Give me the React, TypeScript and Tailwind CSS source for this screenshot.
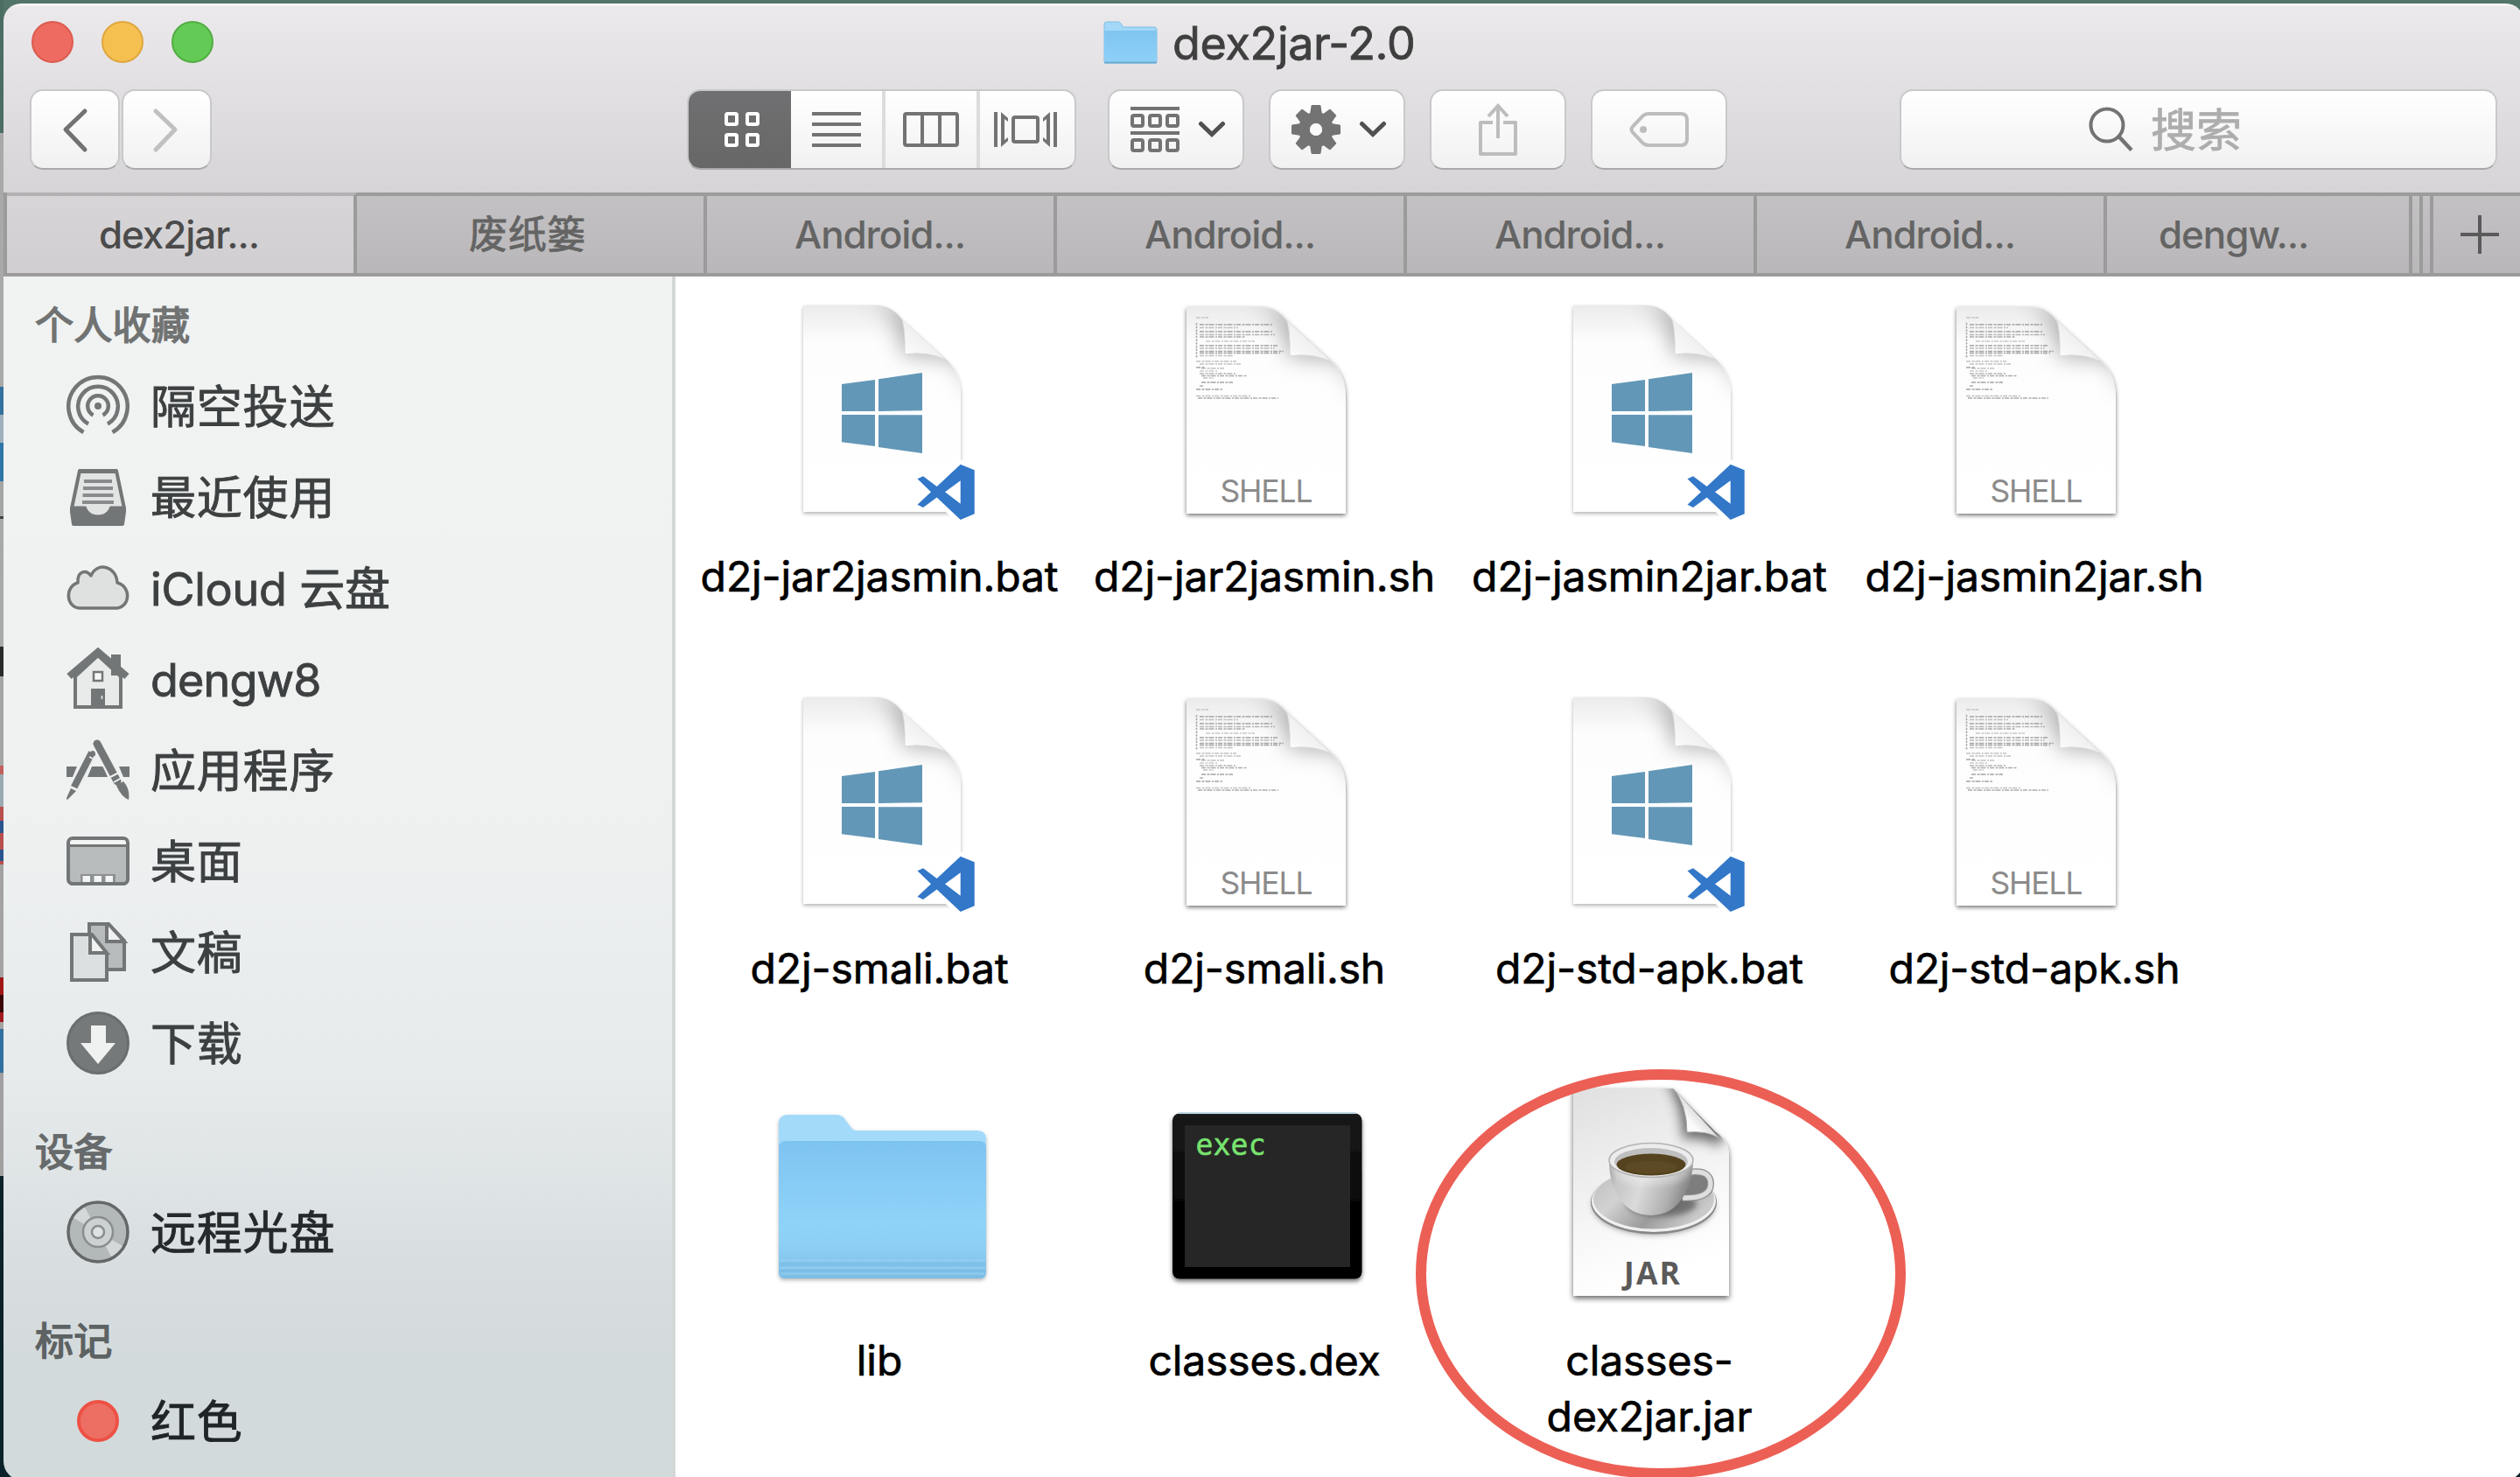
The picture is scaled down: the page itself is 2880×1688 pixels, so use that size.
import React from "react";

const FONT = "font-['Inter','Noto_Sans_CJK_SC',sans-serif]";
const BUTTON =
  "flex h-[92px] items-center rounded-[15px] border-2 border-[#c9c8ca] border-b-[#aaa9aa] bg-linear-to-b from-white to-[#f1f1f1]";

/* ---------- toolbar glyphs ---------- */

function Chevron({ d, color, width }: { d: string; color: string; width: number }) {
  return (
    <svg width="100" height="88" viewBox="0 0 100 88" fill="none" className="block shrink-0">
      <path d={d} stroke={color} strokeWidth={width} strokeLinecap="round" strokeLinejoin="round" />
    </svg>
  );
}

function DownChevron() {
  return (
    <svg width="32" height="22" viewBox="0 0 32 22" fill="none" className="block">
      <path d="M3.5 4.5 L16 16.5 L28.5 4.5" stroke="#515151" strokeWidth="5" strokeLinecap="round" />
    </svg>
  );
}

function GridGlyph() {
  return (
    <svg width="40" height="40" fill="none" stroke="#fff" strokeWidth="4" className="block">
      {[2, 26].map((x) => [2, 26].map((y) => <rect key={`${x}-${y}`} x={x} y={y} width="12" height="12" rx="1.5" />))}
    </svg>
  );
}

function ListGlyph() {
  return (
    <svg width="56" height="40" fill="#737373" className="block">
      {[0, 12, 24, 36].map((y) => (
        <rect key={y} y={y} width="56" height="4" />
      ))}
    </svg>
  );
}

function ColumnsGlyph() {
  return (
    <svg width="64" height="40" fill="none" stroke="#737373" strokeWidth="4" className="block">
      <rect x="2" y="2" width="60" height="36" rx="2" />
      <path d="M22 2V38M42 2V38" />
    </svg>
  );
}

function CoverFlowGlyph() {
  return (
    <svg width="72" height="40" className="block">
      <path d="M2 0V40M70 0V40" stroke="#737373" strokeWidth="4" />
      <path d="M8 0l8 7v4l-4-3V32l4-3v4l-8 7zM64 0l-8 7v4l4-3V32l-4-3v4l8 7z" fill="#737373" />
      <rect x="22" y="6" width="28" height="28" rx="2" fill="none" stroke="#737373" strokeWidth="4" />
    </svg>
  );
}

function ArrangeGlyph() {
  return (
    <svg width="56" height="52" fill="none" stroke="#737373" strokeWidth="4" className="block">
      <path d="M0 2H56M0 30H56" />
      {[2, 22, 42].map((x) => (
        <React.Fragment key={x}>
          <rect x={x} y="10" width="12" height="12" rx="2" />
          <rect x={x} y="38" width="12" height="12" rx="2" />
        </React.Fragment>
      ))}
    </svg>
  );
}

function GearGlyph() {
  return (
    <svg width="56" height="56" viewBox="-28 -28 56 56" fill="#737373" className="block">
      {[0, 45, 90, 135, 180, 225, 270, 315].map((a) => (
        <path key={a} d="M-7.500 -14L-5.500 -27Q-5.300 -28 -4.500 -28H4.500Q5.300 -28 5.500 -27L7.500 -14Z" transform={`rotate(${a})`} />
      ))}
      <circle r="13.500" fill="none" stroke="#737373" strokeWidth="13" />
      <circle r="7" fill="#f9f9f9" />
    </svg>
  );
}

function ShareGlyph() {
  return (
    <svg width="44" height="60" fill="none" stroke="#bdbdbd" strokeWidth="4" className="block">
      <path d="M16 22H2V58H42V22H28" strokeLinejoin="round" />
      <path d="M22 40V3M11 15L22 3L33 15" />
    </svg>
  );
}

function TagGlyph() {
  return (
    <svg width="68" height="40" fill="none" stroke="#bdbdbd" strokeWidth="4" className="block">
      <path d="M22 2H59Q66 2 66 9V31Q66 38 59 38H22Q18 38 15 35L4 23.500Q1 20 4 16.500L15 5Q18 2 22 2Z" />
      <circle cx="16" cy="20" r="4" fill="#bdbdbd" stroke="none" />
    </svg>
  );
}

function SearchGlyph() {
  return (
    <svg width="52" height="52" fill="none" stroke="#737373" strokeWidth="4" className="block">
      <circle cx="21" cy="21" r="18.500" />
      <path d="M34.500 34L49 49.500" strokeWidth="4.500" />
    </svg>
  );
}

function SmallFolder() {
  return (
    <svg width="62" height="52" className="block">
      <defs>
        <linearGradient id="sf" x1="0" y1="0" x2="0" y2="1">
          <stop offset="0" stopColor="#7fc5f1" />
          <stop offset="1" stopColor="#8ed1f7" />
        </linearGradient>
      </defs>
      <path d="M1 4Q1 1 4 1H17Q19 1 20 3L23 7H58Q61 7 61 10V46Q61 48 59 48H3Q1 48 1 46Z" fill="#a3d8f8" stroke="#7fbde3" />
      <path d="M1 11H61V46Q61 48 59 48H3Q1 48 1 46Z" fill="url(#sf)" />
      <path d="M1 47.500H61" stroke="#6cabd2" strokeWidth="2" />
    </svg>
  );
}

/* ---------- sidebar glyphs ---------- */

const G = "#737676";

function AirDrop() {
  return (
    <g fill="none" stroke={G} strokeWidth="4.500">
      <circle cx="36" cy="36" r="4" fill={G} stroke="none" />
      <path d="M30.500 46.500A11.800 11.800 0 1 1 41.500 46.500" />
      <path d="M25 56.500A22.800 22.800 0 1 1 47 56.500" />
      <path d="M19.500 66A33.700 33.700 0 1 1 52.500 66" />
    </g>
  );
}

function Recents() {
  return (
    <g transform="translate(0 -1)">
      <path d="M15 7H57L66 50V54L64 68H8L6 54V50Z" fill="#e2e4e4" stroke={G} strokeWidth="4" strokeLinejoin="round" />
      <path d="M6 49H21Q22 49 22 51Q26 59 36 59Q46 59 50 51Q50 49 51 49H66V53L63.500 67.500H8.500L6 53Z" fill={G} stroke={G} strokeWidth="3" strokeLinejoin="round" />
      <path d="M14 7.500H58" stroke={G} strokeWidth="5" />
      <path d="M20 19H52M19 27H53M18.500 35H53.500M18 43H54" stroke="#888b8b" strokeWidth="4" />
    </g>
  );
}

function Cloud() {
  return (
    <path
      d="M15 59C-1 58 -2 34 13 30C12 17 22 14 28 22C34 6 57 10 58 30C74 34 73 57 58 59Z"
      fill="#dfe1e1"
      stroke={G}
      strokeWidth="3.500"
      strokeLinejoin="round"
    />
  );
}

function House() {
  return (
    <g transform="translate(0 -1)">
      <path d="M10 34L36 10L62 34V69H10Z" fill="#e9ebeb" stroke={G} strokeWidth="4" />
      <rect x="51" y="9" width="11" height="24" fill={G} />
      <path d="M3 34L36 6L69 34" fill="none" stroke={G} strokeWidth="8" />
      <rect x="31" y="29" width="10" height="10" fill="#f5f6f6" stroke={G} strokeWidth="2.500" />
      <rect x="28" y="48" width="16" height="21" fill={G} />
      <path d="M40.500 56V60" stroke="#eee" strokeWidth="1.500" />
    </g>
  );
}

function Applications() {
  return (
    <g>
      <path d="M0 32H12L7 44H0ZM29 32H42L47 44H24ZM60 32H72V44H65Z" fill={G} />
      <path d="M29 18L8 60" stroke="#eef0f0" strokeWidth="12" />
      <path d="M29 16L8.500 56" stroke={G} strokeWidth="8" strokeLinecap="butt" />
      <path d="M26 21L32 24M5 55L12 58" stroke="#eef0f0" strokeWidth="1.500" />
      <path d="M5 57L11 60L1 70Q0 70 0 68Z" fill={G} />
      <path d="M27 17Q28 12 33 15V20Z" fill={G} />
      <path d="M35 8L60 54" stroke="#eef0f0" strokeWidth="12" />
      <path d="M35 6L58 49" stroke={G} strokeWidth="9" strokeLinecap="round" />
      <path d="M50 44L60 39M54 50L63 45" stroke="#eef0f0" strokeWidth="2" />
      <path d="M57 54L65 49Q73 58 71 70Q63 67 57 54Z" fill={G} />
    </g>
  );
}

function Desktop() {
  return (
    <g>
      <rect x="2" y="10" width="68" height="52" rx="5" fill="#b8bbbb" stroke={G} strokeWidth="4" />
      <path d="M4 15Q4 12 7 12H65Q68 12 68 15V17H4Z" fill="#f2f3f3" />
      <path d="M2 18.500H70" stroke={G} strokeWidth="3" />
      <rect x="16" y="51" width="40" height="10" fill="#8e9191" />
      <path d="M18.500 53H27V61H18.500ZM31.500 53H40V61H31.500ZM44.500 53H53V61H44.500Z" fill="#f3f4f4" />
      <path d="M5 62H67" stroke={G} strokeWidth="4" />
    </g>
  );
}

function Documents() {
  return (
    <g stroke={G} strokeWidth="4">
      <path d="M26 4H48L66 23V56H26Z" fill="#b8bbbb" />
      <path d="M46 4V24H66L48 4Z" fill="#f0f2f2" />
      <path d="M6 16H28L46 38V68H6Z" fill="#dcdfdf" />
      <path d="M27 16V37H46L29 16Z" fill="#f0f2f2" />
    </g>
  );
}

function Downloads() {
  return (
    <g>
      <circle cx="36" cy="36" r="34.500" fill="#767979" stroke="#6b6e6e" strokeWidth="3" />
      <path d="M28 16H45V36H56L36 60L16 36H28Z" fill="#f0f2f2" />
    </g>
  );
}

function Disc() {
  return (
    <g>
      <circle cx="36" cy="36" r="34" fill="#b3b8b9" stroke="#646868" strokeWidth="3.500" />
      <path d="M36 36L8 20A33 33 0 0 1 21 8ZM36 36L64 52A33 33 0 0 1 51 64Z" fill="#d4d8d9" />
      <circle cx="36" cy="36" r="17" fill="#ccd1d2" stroke="#8a8e8f" strokeWidth="2.500" />
      <circle cx="36" cy="36" r="7" fill="#dde2e3" stroke="#8a8e8f" strokeWidth="2.500" />
    </g>
  );
}

function RedTag() {
  return <circle cx="36" cy="36" r="22" fill="#ed6f64" stroke="#ee5144" strokeWidth="4" />;
}

/* ---------- file icons, drawn on a 256 × 256 board ---------- */

function PageDefs({ id, strong }: { id: string; strong?: boolean }) {
  const dark = strong ? 0.55 : 0.3;
  return (
    <defs>
      <filter id={`${id}-shadow`} x="-20%" y="-20%" width="140%" height="140%">
        <feDropShadow dx="0" dy="2" stdDeviation={strong ? 2.5 : 2} floodOpacity={dark} />
      </filter>
      <filter id={`${id}-soft`} x="-60%" y="-60%" width="220%" height="220%">
        <feGaussianBlur stdDeviation="12" />
      </filter>
      <linearGradient id={`${id}-fold`} x1="0" y1="1" x2="0.6" y2="0.3">
        <stop offset="0" stopColor="#fff" />
        <stop offset="1" stopColor="#ebebeb" />
      </linearGradient>
      <linearGradient id={`${id}-top`} x1="0" y1="0" x2="0" y2="1">
        <stop offset="0" stopColor="#ebebeb" />
        <stop offset="0.18" stopColor="#fdfdfd" />
        <stop offset="1" stopColor="#fff" />
      </linearGradient>
    </defs>
  );
}

function Page({ id, top, left }: { id: string; top: number; left: number }) {
  const body = `M${left} ${top}H124Q142 ${top} 153 ${top + 15}L200 ${top + 58}Q221 ${top + 74} 221 ${top + 102}V${top + 236}H${left}Z`;
  return (
    <g>
      <clipPath id={`${id}-clip`}>
        <path d={body} />
      </clipPath>
      <path d={body} fill={`url(#${id}-top)`} filter={`url(#${id}-shadow)`} />
      <g clipPath={`url(#${id}-clip)`}>
        <path d={`M110 ${top - 10}Q150 ${top} 154 ${top + 56}L215 ${top + 62}L240 ${top + 110}L226 ${top + 20}Z`} fill="#999" filter={`url(#${id}-soft)`} opacity="0.75" />
        <path d={`M152 ${top + 12}Q158 ${top + 22} 157 ${top + 56}Q182 ${top + 52} 204 ${top + 62}Z`} fill={`url(#${id}-fold)`} stroke="#dadada" />
      </g>
    </g>
  );
}

function BatIcon() {
  return (
    <svg width="256" height="256" className="block">
      <PageDefs id="bat" />
      <Page id="bat" top={9} left={41} />
      <g transform="translate(-97 -20) scale(.33333)" fill="#6397b7">
        <path d="M546 357L660 342V450H546ZM672 340L822 318V448L672 450ZM546 462H660V570L546 556ZM672 463H822V594L672 573Z" />
      </g>
      <path
        d="M220.700 190.700L236.700 197.300V247.300L220.700 254L193.700 228.500L178 240L171.500 236.700L187 222.300L171.500 207.300L178 204.300L193.700 216Z"
        fill="#fff"
        stroke="#fff"
        strokeWidth="10"
        strokeLinejoin="round"
      />
      <path
        fillRule="evenodd"
        d="M220.700 190.700L236.700 197.300V247.300L220.700 254L193.700 228.500L178 240L171.500 236.700L187 222.300L171.500 207.300L178 204.300L193.700 216ZM220.700 209.300V235.700L203 222.300Z"
        fill="#3277c8"
      />
    </svg>
  );
}

/* x, y, length and opacity of each line of the miniature script */
const SCRIPT_LINES = [
  [50, 23, 14, 0.5],
  [54, 31, 84, 0.9],
  [54, 34.5, 44, 0.6],
  [54, 39, 84, 0.9],
  [54, 42.5, 86, 0.7],
  [54, 45, 52, 0.8],
  [61, 50, 56, 0.5],
  [54, 55, 90, 0.9],
  [54, 58, 86, 0.7],
  [54, 61.5, 96, 0.9],
  [54, 63.5, 92, 0.9],
  [54, 66.5, 38, 0.6],
  [50, 73, 46, 0.6],
  [54, 76, 48, 0.6],
  [50, 80, 10, 0.9],
  [56, 81, 26, 0.6],
  [54, 84, 20, 0.5],
  [54, 87, 42, 0.7],
  [56, 89.5, 52, 0.8],
  [58, 92, 12, 0.6],
  [56, 97, 36, 0.9],
  [54, 101, 4, 0.7],
  [50, 105, 30, 0.9],
  [50, 112.5, 62, 0.6],
  [52, 115, 92, 0.8],
];

function ShellIcon() {
  return (
    <svg width="256" height="256" className="block">
      <PageDefs id="sh" strong />
      <Page id="sh" top={11} left={39} />
      <g stroke="#999" strokeWidth="1.700" strokeDasharray="5 1.500 3 1 6 1.500 2 1">
        {SCRIPT_LINES.map(([x, y, w, o]) => (
          <path key={`${x}-${y}`} d={`M${x} ${y}h${w}`} opacity={o} />
        ))}
      </g>
      <path d="M50.500 29V69" stroke="#a5a5a5" strokeWidth="1.500" strokeDasharray="2.500 1.200" />
      <text x="77.500" y="234" textLength="106" fontSize="35.500" fill="#8b8b8b" className="font-['Inter'] font-normal">
        SHELL
      </text>
    </svg>
  );
}

function FolderIcon() {
  return (
    <svg width="256" height="256" className="block">
      <defs>
        <linearGradient id="folder-front" x1="0" y1="0" x2="0" y2="1">
          <stop offset="0" stopColor="#7ec4f1" />
          <stop offset="0.6" stopColor="#8fd3f8" />
          <stop offset="0.75" stopColor="#8ed0f5" />
          <stop offset="1" stopColor="#7cbce6" />
        </linearGradient>
        <filter id="folder-shadow" x="-10%" y="-10%" width="120%" height="120%">
          <feDropShadow dx="0" dy="2" stdDeviation="2" floodOpacity="0.3" />
        </filter>
      </defs>
      <path d="M13 48Q13 38 23 38H79Q86 38 90 45L96 53Q98 56 102 56H240Q250 56 250 66V216Q250 225 244 225H19Q13 225 13 217Z" fill="#a3dafa" filter="url(#folder-shadow)" />
      <path d="M13 76Q13 68 21 68H242Q250 68 250 76V217Q250 225 244 225H19Q13 225 13 217Z" fill="url(#folder-front)" />
      <path d="M14 204.500H249M14 213H249M15 219.500H248" stroke="#9bd3f4" strokeWidth="1.800" opacity="0.6" />
      <path d="M14 208.500H249M14 216.500H249" stroke="#73b5df" strokeWidth="2.500" opacity="0.35" />
    </svg>
  );
}

function ExecIcon() {
  return (
    <svg width="256" height="256" className="block">
      <defs>
        <linearGradient id="exec-frame" x1="0" y1="0" x2="0" y2="1">
          <stop offset="0" stopColor="#1a1a1a" />
          <stop offset="0.7" stopColor="#000" />
        </linearGradient>
        <filter id="exec-shadow" x="-10%" y="-10%" width="120%" height="120%">
          <feDropShadow dx="0" dy="3" stdDeviation="2.500" floodOpacity="0.55" />
        </filter>
      </defs>
      <rect x="23" y="36.500" width="216.500" height="189" rx="8" fill="url(#exec-frame)" filter="url(#exec-shadow)" />
      <path d="M30 36H232" stroke="#bcd8e4" strokeWidth="2" />
      <rect x="37" y="50" width="189" height="162" fill="#262626" />
      <text x="49.500" y="84" textLength="80" fontSize="33" fill="#78e36f" stroke="#78e36f" strokeWidth="0.500" className="font-['DejaVu_Sans_Mono']">
        exec
      </text>
    </svg>
  );
}

function JarIcon() {
  const body = "M41 8H155L203 57Q219 68 219 84V245H41Z";
  return (
    <svg width="256" height="256" className="block">
      <defs>
        <linearGradient id="jar-page" x1="0" y1="0" x2="0.3" y2="1">
          <stop offset="0" stopColor="#e0e0e0" />
          <stop offset="0.7" stopColor="#f8f8f8" />
          <stop offset="1" stopColor="#fff" />
        </linearGradient>
        <linearGradient id="jar-cup" x1="0" y1="0" x2="1" y2="0.2">
          <stop offset="0" stopColor="#9a9a9a" />
          <stop offset="0.15" stopColor="#c6c6c6" />
          <stop offset="0.45" stopColor="#dadada" />
          <stop offset="0.8" stopColor="#b0b0b0" />
          <stop offset="1" stopColor="#858585" />
        </linearGradient>
        <linearGradient id="jar-saucer" x1="0" y1="0" x2="1" y2="0.5">
          <stop offset="0" stopColor="#bcbcbc" />
          <stop offset="0.35" stopColor="#d2d2d2" />
          <stop offset="0.7" stopColor="#9c9c9c" />
          <stop offset="1" stopColor="#cacaca" />
        </linearGradient>
        <linearGradient id="jar-fold" x1="0" y1="1" x2="0.7" y2="0.3">
          <stop offset="0" stopColor="#fff" />
          <stop offset="0.5" stopColor="#fafafa" />
          <stop offset="1" stopColor="#bdbdbd" />
        </linearGradient>
        <filter id="jar-shadow" x="-20%" y="-20%" width="140%" height="140%">
          <feDropShadow dx="0" dy="3" stdDeviation="3" floodOpacity="0.6" />
        </filter>
        <filter id="jar-blur" x="-60%" y="-60%" width="220%" height="220%">
          <feGaussianBlur stdDeviation="7" />
        </filter>
        <filter id="jar-blur-small" x="-40%" y="-40%" width="180%" height="180%">
          <feGaussianBlur stdDeviation="3" />
        </filter>
        <clipPath id="jar-clip">
          <path d={body} />
        </clipPath>
      </defs>
      <path d={body} fill="url(#jar-page)" filter="url(#jar-shadow)" />
      <g clipPath="url(#jar-clip)">
        <path d="M148 0Q167 30 166 66Q188 62 208 74L230 0Z" fill="#444" filter="url(#jar-blur)" opacity="0.8" />
        <path d="M154 6Q171 26 171 58Q195 56 208 65Z" fill="url(#jar-fold)" stroke="#aaa" strokeWidth="1" />
      </g>
      {/* saucer */}
      <ellipse cx="133" cy="141" rx="70" ry="34" fill="#444" filter="url(#jar-blur-small)" opacity="0.5" />
      <ellipse cx="133" cy="138" rx="72" ry="36.500" fill="#888" />
      <ellipse cx="133" cy="136.500" rx="71" ry="35.500" fill="#f0f0f0" />
      <ellipse cx="133" cy="134.500" rx="69" ry="34" fill="url(#jar-saucer)" />
      <ellipse cx="142" cy="140" rx="40" ry="14" fill="#444" filter="url(#jar-blur-small)" opacity="0.6" />
      {/* handle */}
      <path d="M172 104Q198 100 198 117Q198 134 166 133" fill="#7d7d7d" stroke="#8b8b8b" strokeWidth="8" />
      <path d="M172 104Q198 100 198 117Q198 134 166 133" fill="none" stroke="#dedede" strokeWidth="5.500" />
      {/* cup */}
      <path d="M82 92C82 120 96 153 130 153C163 153 177 120 178 92Z" fill="url(#jar-cup)" />
      <path d="M84 100C88 115 108 118 130 118C152 118 172 115 176 100L178 90H82Z" fill="#fff" opacity="0.3" filter="url(#jar-blur-small)" />
      <ellipse cx="130" cy="90" rx="48" ry="19.500" fill="#ececec" stroke="#b3b3b3" strokeWidth="1.500" />
      <ellipse cx="130" cy="91.500" rx="42" ry="15.500" fill="#bfbfbf" />
      <ellipse cx="130" cy="95" rx="39.500" ry="12.500" fill="#55431f" />
      <ellipse cx="130" cy="98" rx="30" ry="7" fill="#5f4c26" opacity="0.8" />
      <text x="99" y="231.500" textLength="64" fontSize="35.500" fill="#5a5a5a" className="font-['Open_Sans'] font-bold">
        JAR
      </text>
    </svg>
  );
}

/* ---------- data ---------- */

const FAVORITES = [
  { name: "隔空投送", icon: <AirDrop /> },
  { name: "最近使用", icon: <Recents /> },
  { name: "iCloud 云盘", icon: <Cloud />, tracking: "tracking-[-0.2px]" },
  { name: "dengw8", icon: <House />, tracking: "tracking-[-0.8px]" },
  { name: "应用程序", icon: <Applications /> },
  { name: "桌面", icon: <Desktop /> },
  { name: "文稿", icon: <Documents /> },
  { name: "下载", icon: <Downloads /> },
];

const FILES = [
  { name: "d2j-jar2jasmin.bat", icon: <BatIcon /> },
  { name: "d2j-jar2jasmin.sh", icon: <ShellIcon /> },
  { name: "d2j-jasmin2jar.bat", icon: <BatIcon /> },
  { name: "d2j-jasmin2jar.sh", icon: <ShellIcon /> },
  { name: "d2j-smali.bat", icon: <BatIcon /> },
  { name: "d2j-smali.sh", icon: <ShellIcon /> },
  { name: "d2j-std-apk.bat", icon: <BatIcon /> },
  { name: "d2j-std-apk.sh", icon: <ShellIcon /> },
  { name: "lib", icon: <FolderIcon /> },
  { name: "classes.dex", icon: <ExecIcon /> },
  { name: "classes-\ndex2jar.jar", icon: <JarIcon /> },
];

/* colours of whatever lies behind the window's left edge: [height, colour] */
const EDGE: [number, string][] = [
  [152, "#4c6d63"],
  [290, "#a9a9a9"],
  [32, "#33719f"],
  [32, "#9fb0bc"],
  [44, "#2f76a8"],
  [40, "#a5a5a5"],
  [3, "#444444"],
  [146, "#a9a9a9"],
  [34, "#2a2a2a"],
  [102, "#a5a5a5"],
  [10, "#c4605c"],
  [37, "#9aaab2"],
  [16, "#b9504e"],
  [14, "#2a5590"],
  [19, "#b9504e"],
  [13, "#2a5590"],
  [4, "#b9504e"],
  [129, "#a3a3a3"],
  [20, "#a01717"],
  [20, "#3a0505"],
  [11, "#a01a20"],
  [8, "#a3a3a3"],
  [50, "#30719f"],
  [118, "#a0a0a0"],
  [344, "#0b222b"],
];

/* ---------- window ---------- */

function Toolbar() {
  return (
    <div className="-mt-px flex h-[92px] items-start">
      <div className="ml-[30px] flex gap-[2px]">
        <div className={`${BUTTON} w-[103px]`}>
          <Chevron d="M61 23L39 44L61 67" color="#727272" width={5} />
        </div>
        <div className={`${BUTTON} w-[103px]`}>
          <Chevron d="M37 23L59 44L37 67" color="#c0c0c0" width={5} />
        </div>
      </div>
      <div className="ml-[543px] flex h-[92px] w-[445px] overflow-hidden rounded-[15px] border-2 border-[#c9c8ca] border-b-[#aaa9aa] bg-linear-to-b from-white to-[#f1f1f1]">
        <div className="-my-0.5 -ml-0.5 flex w-[119px] items-center bg-linear-to-b from-[#707072] to-[#676767] pl-[43px]">
          <GridGlyph />
        </div>
        <div className="flex w-[108px] items-center border-r-4 border-[#dcdcdc] pl-6">
          <ListGlyph />
        </div>
        <div className="flex w-[108px] items-center border-r-4 border-[#dcdcdc] pl-5">
          <ColumnsGlyph />
        </div>
        <div className="flex items-center pl-4">
          <CoverFlowGlyph />
        </div>
      </div>
      <div className={`${BUTTON} ml-9 w-[156px] gap-[21px] pl-6`}>
        <ArrangeGlyph />
        <DownChevron />
      </div>
      <div className={`${BUTTON} ml-[28px] w-[156px] gap-[21px] pl-6`}>
        <GearGlyph />
        <DownChevron />
      </div>
      <div className={`${BUTTON} ml-[28px] w-[156px] justify-center`}>
        <ShareGlyph />
      </div>
      <div className={`${BUTTON} ml-[28px] w-[156px] justify-center`}>
        <TagGlyph />
      </div>
      <div className={`${BUTTON} ml-[197px] w-[683px] gap-[19px] pl-[214px]`}>
        <SearchGlyph />
        <span className="pt-1 text-[52px] leading-[60px] text-[#adadad] [-webkit-text-stroke:0.8px_#adadad]">搜索</span>
      </div>
    </div>
  );
}

function Tab({ label }: { label: string }) {
  return (
    <div className="flex h-full w-[400px] shrink-0 items-center justify-center border-r-4 border-[#9b9b9b] pr-px">{label}</div>
  );
}

function TabBar() {
  return (
    <div className="flex h-[96px] shrink-0 border-y-4 border-l-4 border-[#9b9b9b] bg-linear-to-b from-[#c3c1c3] to-[#b9b7b9] text-[44px] leading-[60px] font-medium tracking-[-1.1px] text-[#646464]">
      <div className="-mt-1 flex h-[92px] w-[400px] shrink-0 items-center justify-center border-t-4 border-r-4 border-t-[#b3b2b3] border-r-[#9b9b9b] bg-linear-to-b from-[#d7d5d7] to-[#d0ced0] pr-[3px] text-[#4b4b4b]">
        dex2jar...
      </div>
      <div className="flex h-full w-[400px] shrink-0 items-center justify-center border-r-4 border-[#9b9b9b] pr-[6px] font-normal tracking-[0.6px] [-webkit-text-stroke:0.9px_#646464]">
        废纸篓
      </div>
      <Tab label="Android..." />
      <Tab label="Android..." />
      <Tab label="Android..." />
      <Tab label="Android..." />
      <div className="flex h-full w-[349px] shrink-0 items-center border-r-4 border-[#9b9b9b] pl-[59px]">dengw...</div>
      <div className="h-full w-3 shrink-0 border-r-4 border-[#9b9b9b]" />
      <div className="h-full w-3 shrink-0 border-r-4 border-[#9b9b9b]" />
      <div className="flex h-full items-center pl-[31px]">
        <svg width="44" height="44" className="block" stroke="#5a5a5a" strokeWidth="4">
          <path d="M0 22H44M22 0V44" />
        </svg>
      </div>
    </div>
  );
}

function SideItem({ icon, name, tracking }: { icon: React.ReactNode; name: string; tracking?: string }) {
  return (
    <div className="flex h-[104px] items-center gap-[24px] pl-[72px]">
      <svg width="72" height="72" className="block shrink-0">
        {icon}
      </svg>
      <span
        className={`pt-[3px] text-[52px] leading-[64px] whitespace-nowrap [-webkit-text-stroke:0.9px_currentColor] ${tracking ?? "tracking-[0.8px]"}`}
      >
        {name}
      </span>
    </div>
  );
}

function SideHeader({ children }: { children: string }) {
  return <div className="pl-9 text-[44px] leading-[60px] tracking-[0.3px] [-webkit-text-stroke:1.6px_currentColor]">{children}</div>;
}

function Sidebar() {
  return (
    <div className="flex w-[768px] shrink-0 flex-col border-r-4 border-[#d4d7d7] bg-[linear-gradient(to_bottom,#f0f3f2_0%,#eff1f1_45%,#e6eaeb_67%,#d9dfe1_81%,#d3dadc_90%,#d3dadc_100%)]">
      <div className="flex h-24 items-center pt-4 text-[#717373]">
        <SideHeader>个人收藏</SideHeader>
      </div>
      <div className="text-[#3d4040]">
        {FAVORITES.map((f) => (
          <SideItem key={f.name} icon={f.icon} name={f.name} tracking={f.tracking} />
        ))}
      </div>
      <div className="flex h-[112px] items-center pt-[34px] text-[#666a6b]">
        <SideHeader>设备</SideHeader>
      </div>
      <div className="text-[#25292b]">
        <SideItem icon={<Disc />} name="远程光盘" />
      </div>
      <div className="flex h-[112px] items-center pt-[34px] text-[#5d6263]">
        <SideHeader>标记</SideHeader>
      </div>
      <div className="text-[#1f2426]">
        <SideItem icon={<RedTag />} name="红色" />
      </div>
    </div>
  );
}

function FileGrid() {
  return (
    <div className="relative min-w-0 flex-1 bg-white">
      <div className="grid grid-cols-[repeat(4,440px)] auto-rows-[448px] pt-6 pl-[13px]">
        {FILES.map((f) => (
          <div key={f.name} className="flex flex-col items-center">
            {f.icon}
            <div className="mt-[31px] text-center text-[48px] leading-[64px] tracking-[-0.1px] whitespace-pre text-black [-webkit-text-stroke:0.7px_#000]">
              {f.name}
            </div>
          </div>
        ))}
      </div>
      <div className="absolute top-[906px] left-[846px] h-[468px] w-[560px] rounded-[50%] border-[12px] border-[#ec5f55]" />
    </div>
  );
}

export default function App() {
  return (
    <div className={`${FONT} relative flex h-[1688px] w-[2880px] overflow-hidden bg-[#0b222b]`}>
      <div className="absolute inset-x-0 top-0 h-12 bg-[#527469]" />
      <div className="relative w-1 shrink-0">
        {EDGE.map(([h, c], i) => (
          <div key={i} style={{ height: h, background: c }} />
        ))}
      </div>
      <div className="relative mt-1 flex h-[1688px] w-[2880px] shrink-0 flex-col overflow-hidden rounded-t-[20px] rounded-b-[22px]">
        <div className="h-[216px] shrink-0 border-t-[3px] border-[#f5f4f5] bg-linear-to-b from-[#ebe9eb] to-[#d6d4d6]">
          <div className="flex h-[96px] items-start">
            <div className="mt-[17px] ml-8 flex gap-8">
              <div className="size-12 rounded-full border-2 border-[#dc5b50] bg-[#ed6b60]" />
              <div className="size-12 rounded-full border-2 border-[#dfa63f] bg-[#f5c04f]" />
              <div className="size-12 rounded-full border-2 border-[#52ad43] bg-[#63ca56]" />
            </div>
            <div className="mt-[11px] ml-[1017px] flex items-center gap-[17px]">
              <SmallFolder />
              <span className="text-[52px] leading-[64px] tracking-[-0.3px] whitespace-nowrap text-[#3f3f3f] [-webkit-text-stroke:0.8px_#3f3f3f]">
                dex2jar-2.0
              </span>
            </div>
          </div>
          <Toolbar />
        </div>
        <TabBar />
        <div className="flex min-h-0 flex-1">
          <Sidebar />
          <FileGrid />
        </div>
      </div>
    </div>
  );
}
